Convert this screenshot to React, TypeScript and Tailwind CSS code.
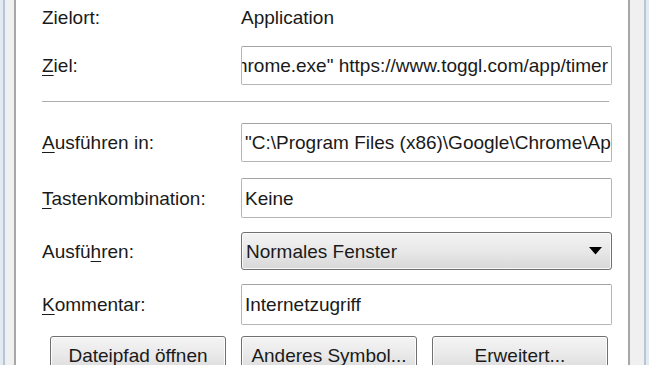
import React from "react";

const font = { fontFamily: '"Liberation Sans", Arial, sans-serif' };

function U({ children }: { children: React.ReactNode }) {
  return <span className="underline decoration-1 underline-offset-[3px]">{children}</span>;
}

function Field({ children, align = "start" }: { children: React.ReactNode; align?: "start" | "end" }) {
  return (
    <div
      className={`flex h-full w-[371px] items-center overflow-hidden whitespace-nowrap rounded-[2px] border border-[#b5b5b5] border-t-[#a3a3a3] bg-white px-[3px] ${
        align === "end" ? "justify-end" : "justify-start"
      }`}
    >
      <span className="shrink-0">{children}</span>
    </div>
  );
}

function Row({ label, h, mt, children }: { label: React.ReactNode; h: number; mt: number; children: React.ReactNode }) {
  return (
    <div className="flex shrink-0 items-center" style={{ height: h, marginTop: mt }}>
      <div className="w-[199px] shrink-0">{label}</div>
      {children}
    </div>
  );
}

function Btn({ children }: { children: React.ReactNode }) {
  return (
    <div className="flex h-[38px] w-[176px] items-start justify-center rounded-[3px] border border-[#707070] bg-gradient-to-b from-[#f4f4f4] via-[#e9e9e9] to-[#d9d9d9] pt-[9px] shadow-[inset_0_0_0_1px_#fcfcfc]">
      {children}
    </div>
  );
}

export default function App() {
  return (
    <div className="flex h-[365px] w-[649px] overflow-hidden text-[19px] leading-none text-[#1a1a1a]" style={font}>
      <div className="w-[3px] shrink-0 bg-[#e4eaf2]" />
      <div className="w-[2px] shrink-0 bg-[#b8c5d6]" />
      <div className="w-[9px] shrink-0 bg-[#f0f0f0]" />
      <div className="w-[2px] shrink-0 bg-[#a7a7a7]" />
      <div className="flex w-[612px] shrink-0 flex-col bg-white pl-[26px]">
        <Row label="Zielort:" h={34} mt={0}>
          <span>Application</span>
        </Row>
        <Row label={<><U>Z</U>iel:</>} h={39} mt={12}>
          <Field align="end">"C:\Program Files (x86)\Google\Chrome\Application\chrome.exe" https://www.toggl.com/app/timer</Field>
        </Row>
        <div className="mt-[16px] h-px w-[567px] shrink-0 bg-[#acacac]" />
        <Row label={<><U>A</U>usführen in:</>} h={39} mt={21}>
          <Field>"C:\Program Files (x86)\Google\Chrome\Application</Field>
        </Row>
        <Row label={<><U>T</U>astenkombination:</>} h={40} mt={16}>
          <Field>Keine</Field>
        </Row>
        <Row label={<>Ausfü<U>h</U>ren:</>} h={38} mt={14}>
          <div className="flex h-full w-[371px] items-center justify-between rounded-[3px] border border-[#707070] bg-gradient-to-b from-[#f3f3f3] via-[#e8e8e8] to-[#d8d8d8] pl-[4px] pr-[9px] shadow-[inset_0_0_0_1px_#fafafa]">
            <span>Normales Fenster</span>
            <svg width="13" height="8" viewBox="0 0 13 8">
              <path d="M0 0 H13 L6.5 7.5 Z" fill="#000" />
            </svg>
          </div>
        </Row>
        <Row label={<><U>K</U>ommentar:</>} h={41} mt={14}>
          <Field>Internetzugriff</Field>
        </Row>
        <div className="ml-[8px] mt-[11px] flex shrink-0 gap-[15px]">
          <Btn>Dateipfad öffnen</Btn>
          <Btn>Anderes Symbol...</Btn>
          <Btn>Erweitert...</Btn>
        </div>
      </div>
      <div className="w-[2px] shrink-0 bg-[#a7a7a7]" />
      <div className="w-[14px] shrink-0 bg-[#f0f0f0]" />
      <div className="w-[2px] shrink-0 bg-[#b8c5d6]" />
      <div className="flex-1 bg-[#e4eaf2]" />
    </div>
  );
}
